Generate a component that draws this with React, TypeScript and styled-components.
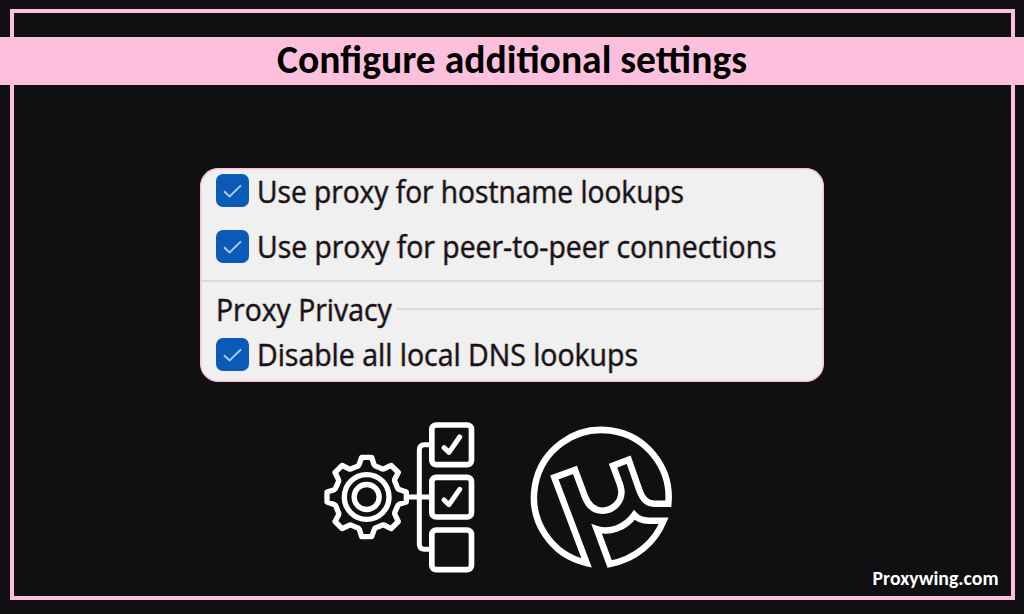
import styled, { createGlobalStyle } from "styled-components";

const PINK = "#fcc0dd";
const INK = "#101012";

type Option = {
  label: string;
  stretch: number;
};

const PROXY_OPTIONS: Option[] = [
  { label: "Use proxy for hostname lookups", stretch: 0.907 },
  { label: "Use proxy for peer-to-peer connections", stretch: 0.914 }
];

const PRIVACY_OPTIONS: Option[] = [
  { label: "Disable all local DNS lookups", stretch: 0.918 }
];

function CheckOption({ label, stretch }: Option) {
  return (
    <OptionRow>
      <CheckBox>
        <svg width="33" height="33" viewBox="0 0 33 33" fill="none">
          <path
            d="M8 17.2 L13.6 22.4 L25 11.4"
            stroke="#a9d0f0"
            strokeWidth="2"
          />
        </svg>
      </CheckBox>
      <PanelText $stretch={stretch}>{label}</PanelText>
    </OptionRow>
  );
}

// one eighth of the cog outline, repeated every 45 degrees
function cogPath() {
  const rotate = (x: number, y: number, deg: number) => {
    const a = (deg * Math.PI) / 180;
    const px = x * Math.cos(a) - y * Math.sin(a);
    const py = x * Math.sin(a) + y * Math.cos(a);
    return `${px.toFixed(1)} ${py.toFixed(1)}`;
  };
  let d = "";
  for (let i = 0; i < 8; i++) {
    const deg = i * 45;
    d += `${i === 0 ? "M" : "L"}${rotate(-15, -119, deg)} `;
    d += `L${rotate(15, -119, deg)} `;
    d += `L${rotate(22, -97, deg)} `;
    d += `Q${rotate(24, -93, deg)} ${rotate(29, -92, deg)} `;
    d += `L${rotate(45, -85, deg)} `;
    d += `Q${rotate(49, -83, deg)} ${rotate(53, -85, deg)} `;
  }
  return d + "Z";
}

function SettingsIcon() {
  return (
    <svg width="170" height="170" viewBox="0 0 510 510" fill="none">
      <g stroke="#fff" strokeLinejoin="round" strokeLinecap="round">
        <g transform="translate(155 255)" strokeWidth="16">
          <path d={cogPath()} />
          <circle r="67" />
          <circle r="37.5" />
        </g>
        <path
          d="M281 255H350M350 98H329Q313 98 313 114V396Q313 412 329 412H350"
          strokeWidth="15"
        />
        <g strokeWidth="17">
          <rect x="350.5" y="39" width="119" height="119" rx="13" />
          <rect x="350.5" y="196" width="119" height="119" rx="13" />
          <rect x="350.5" y="354" width="119" height="119" rx="13" />
        </g>
        <path
          d="M387 107L402 121L434 75M387 264L402 278L434 232"
          strokeWidth="15"
        />
      </g>
    </svg>
  );
}

function TorrentIcon() {
  return (
    <svg width="165" height="165" viewBox="0 0 495 495" fill="none">
      <g stroke="#fff" strokeWidth="19.5" strokeMiterlimit="8">
        <path d="M445 266A202 202 0 1 0 200 444L103 187L165 165L194 243C204 270 220 287 247 287C281 287 307 258 304 226C303 217 301 211 298 203L279 152L326 134L359 228C368 253 380 266 402 266Z" />
        <path d="M230 342C268 355 315 339 343 300C354 312 366 317 386 317H431C405 382 345 434 269 447Z" />
      </g>
    </svg>
  );
}

export default function App() {
  return (
    <Page>
      <GlobalStyle />
      <Frame />
      <Banner>
        <Title>Configure additional settings</Title>
      </Banner>
      <Content>
        <Panel>
          <OptionList>
            {PROXY_OPTIONS.map((opt) => (
              <CheckOption key={opt.label} {...opt} />
            ))}
          </OptionList>
          <Divider />
          <GroupHeader>
            <GroupStub />
            <GroupName>
              <PanelText $stretch={0.915}>Proxy Privacy</PanelText>
            </GroupName>
            <GroupRule />
          </GroupHeader>
          <PrivacyList>
            {PRIVACY_OPTIONS.map((opt) => (
              <CheckOption key={opt.label} {...opt} />
            ))}
          </PrivacyList>
        </Panel>
        <Icons>
          <SettingsIcon />
          <TorrentIcon />
        </Icons>
      </Content>
      <Brand>Proxywing.com</Brand>
    </Page>
  );
}

const GlobalStyle = createGlobalStyle`
  * {
    box-sizing: border-box;
  }
  body {
    margin: 0;
    background: ${INK};
  }
  svg {
    display: block;
    flex-shrink: 0;
  }
`;

const Page = styled.div`
  position: relative;
  width: 1024px;
  height: 614px;
  overflow: hidden;
  padding-top: 37px;
  background: ${INK};
`;

/* the outline runs behind everything, the banner crosses it */
const Frame = styled.div`
  position: absolute;
  inset: 9px 9px 14px 10px;
  border: 4px solid ${PINK};
`;

const Banner = styled.header`
  position: relative;
  display: flex;
  justify-content: center;
  align-items: center;
  height: 48px;
  padding-bottom: 2px;
  background: ${PINK};
`;

const Title = styled.h1`
  margin: 0;
  font: bold 39.6px/44px Carlito, Lato, sans-serif;
  color: #000;
  white-space: nowrap;
`;

const Content = styled.main`
  position: relative;
  display: flex;
  flex-direction: column;
  padding: 83px 0 0 200px;
`;

const Panel = styled.section`
  width: 624px;
  height: 214px;
  border: 1px solid ${PINK};
  border-radius: 18px;
  background: #f0f0f0;
  box-shadow: inset 0 0 0 1px rgba(252, 192, 221, 0.5);
  overflow: hidden;
`;

const OptionList = styled.div`
  display: flex;
  flex-direction: column;
  gap: 22.5px;
  padding: 5px 0 0 15px;
`;

const PrivacyList = styled(OptionList)`
  padding-top: 10.6px;
`;

const OptionRow = styled.div`
  display: flex;
  align-items: center;
  gap: 8px;
  height: 33px;
`;

const CheckBox = styled.span`
  flex-shrink: 0;
  width: 33px;
  height: 33px;
  border-radius: 7px;
  background: #0c5ab8;
`;

const PanelText = styled.span<{ $stretch: number }>`
  display: inline-block;
  padding-top: 1px;
  font: 31px/33px "Open Sans", "Noto Sans", sans-serif;
  color: #1b1116;
  -webkit-text-stroke: 0.35px #1b1116;
  text-shadow:
    -1px 0 rgba(240, 170, 60, 0.35),
    1px 0 rgba(70, 170, 250, 0.35);
  white-space: nowrap;
  transform: scaleX(${(p) => p.$stretch});
  transform-origin: left center;
`;

const Divider = styled.div`
  height: 2px;
  margin-top: 17.5px;
  background: #dadada;
`;

const GroupHeader = styled.div`
  display: flex;
  align-items: center;
  height: 45px;
  padding-top: 8px;
`;

const GroupStub = styled.span`
  width: 2px;
  height: 2px;
  background: #dcdce0;
`;

const GroupName = styled.span`
  width: 181px;
  margin-left: 13px;
`;

const GroupRule = styled.span`
  flex: 1;
  height: 2px;
  background: #d9d9dc;
`;

const Icons = styled.div`
  display: flex;
  gap: 35px;
  padding: 30px 0 0 115px;

  svg:last-child {
    margin-top: 3px;
  }
`;

const Brand = styled.footer`
  position: absolute;
  right: 25.5px;
  bottom: 24.5px;
  font: bold 19.8px/24px Carlito, Lato, sans-serif;
  color: #fff;
`;
